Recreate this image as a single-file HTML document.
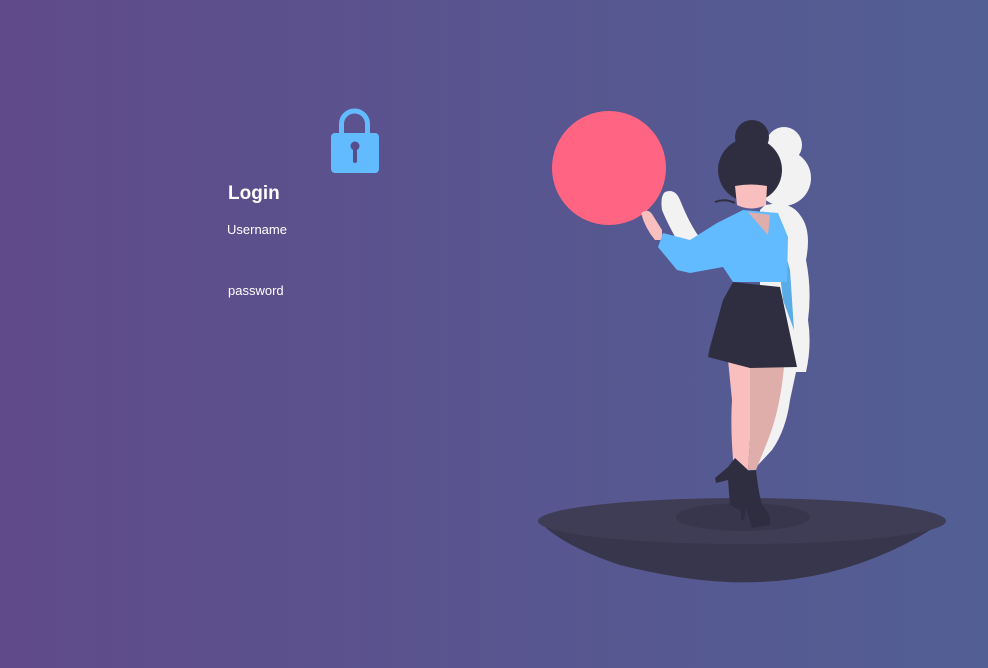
<!DOCTYPE html>
<html><head><meta charset="utf-8"><style>
html,body{margin:0;padding:0}
body{width:988px;height:668px;overflow:hidden;background:linear-gradient(90deg,#604a89 0%,#585690 55%,#525f94 100%);font-family:"Liberation Sans",sans-serif;color:#fff;position:relative}
.t{position:absolute;white-space:nowrap}
</style></head><body>
<svg class="t" style="left:0;top:0" width="988" height="668" viewBox="0 0 988 668">
 <!-- lock -->
 <path d="M341.5 134 V124 A13 13 0 0 1 367.5 124 V134" fill="none" stroke="#63bbff" stroke-width="5"/>
 <rect x="331" y="133" width="48" height="40" rx="4" fill="#63bbff"/>
 <circle cx="355" cy="146" r="4.5" fill="#574d8a"/>
 <rect x="353" y="146" width="4" height="17" rx="2" fill="#574d8a"/>
 <!-- platform -->
 <path d="M538 520 Q560 545 620 565 Q700 585 760 582 Q860 578 946 520 Z" fill="#38364d"/>
 <ellipse cx="742" cy="521" rx="204" ry="23" fill="#3f3d56"/>
 <ellipse cx="743" cy="517" rx="67" ry="14" fill="#37364c"/>
 <!-- ball -->
 <circle cx="609" cy="168" r="57" fill="#ff6582"/>
 <!-- shadow figure -->
 <g fill="#f2f2f2">
  <circle cx="784" cy="145" r="18"/>
  <circle cx="783" cy="178" r="28"/>
  <path d="M765 205 Q790 200 800 215 Q812 230 806 260 Q812 290 808 320 Q812 345 806 372 L796 372 L790 400 Q786 430 772 450 L758 465 L750 460 L760 300 L760 210 Z"/>
  <path d="M665 192 Q675 188 680 200 Q690 225 700 238 L705 258 L690 262 Q670 230 662 210 Q660 196 665 192 Z"/>
 </g>
 <path d="M774 226 Q785 250 790 270 L794 330 L783 300 Z" fill="#5aace6"/>
 <!-- legs -->
 <path d="M728 360 L752 362 L750 440 L748 470 L734 470 Q730 430 732 400 Z" fill="#f9bebe"/>
 <path d="M750 365 L784 367 Q780 410 768 440 L756 470 L748 470 L750 440 Z" fill="#e0aeaa"/>
 <!-- boots -->
 <path d="M735 458 L748 470 L742 500 L740 510 L730 505 L728 480 L716 483 L715 478 L728 467 Z" fill="#2f2e41"/>
 <path d="M740 472 L756 470 Q758 490 762 505 Q772 515 770 525 L752 528 L746 508 L744 520 L741 520 Z" fill="#2f2e41"/>
 <!-- skirt -->
 <path d="M733 282 L780 287 L797 367 L750 368 L708 357 L710 347 L723 300 Z" fill="#2f2e41"/>
 <!-- hand -->
 <path d="M641 213 Q648 208 652 214 L662 230 L662 240 L655 240 Q645 228 641 213 Z" fill="#f9bebe"/>
 <!-- shirt -->
 <path d="M743 210 L778 213 L788 237 L787 282 L733 282 L723 267 L690 273 L677 270 L658 247 L663 233 L690 240 L717 223 Z" fill="#63bbff"/>
 <path d="M748 212 L770 215 L768 235 Z" fill="#e0aeaa"/>
 <!-- head -->
 <circle cx="752" cy="137" r="17" fill="#2f2e41"/>
 <circle cx="750" cy="170" r="32" fill="#2f2e41"/>
 <path d="M735 186 Q751 183 767 186 L766 205 Q751 212 737 205 Z" fill="#f9bebe"/>
 <path d="M715 202 Q725 198 735 203" fill="none" stroke="#2f2e41" stroke-width="2"/>
</svg>
<div class="t" style="left:228px;top:183px;font-size:19px;font-weight:bold">Login</div>
<div class="t" style="left:227px;top:222px;font-size:13px">Username</div>
<div class="t" style="left:228px;top:283px;font-size:13px">password</div>
</body></html>
